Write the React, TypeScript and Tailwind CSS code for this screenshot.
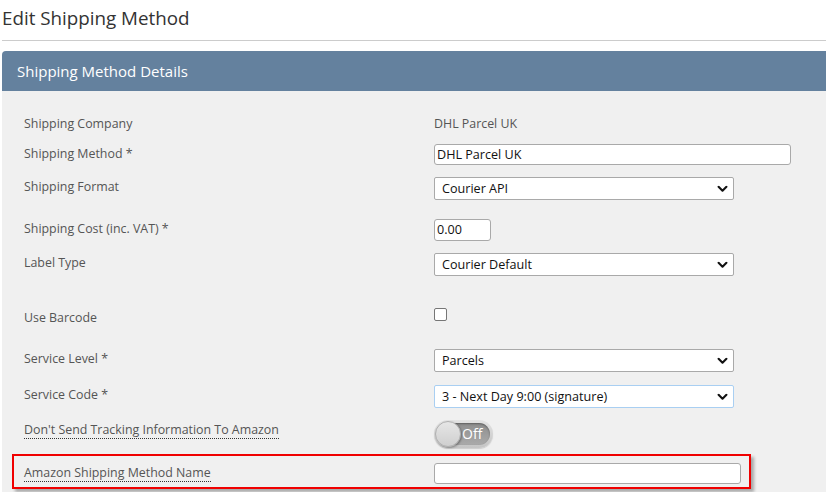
import React from "react";

const Chevron = () => (
  <svg width="11" height="7" viewBox="0 0 12 8" className="absolute right-[5px] top-1/2 -translate-y-1/2">
    <path d="M1.5 1.5 L6 6 L10.5 1.5" fill="none" stroke="#111" strokeWidth="2.4" strokeLinecap="round" strokeLinejoin="round" />
  </svg>
);

function Select({ value, width, focus }: { value: string; width: string; focus?: boolean }) {
  return (
    <div
      className={`relative h-[23px] bg-white border rounded-[2px] ${focus ? "border-[#a9cff2]" : "border-[#a9a9a9]"} ${width}`}
    >
      <div className="pl-[7px] text-[12.6px] leading-[21px] text-[#111]">{value}</div>
      <Chevron />
    </div>
  );
}

function Row({ label, h, children, dotted }: { label: string; h: string; children?: React.ReactNode; dotted?: boolean }) {
  return (
    <div className={`flex items-start ${h}`}>
      <div className="w-[410px] pt-[1px] text-[12.4px] leading-[18px] text-[#555]">
        {dotted ? <span className="border-b border-dotted border-[#333]">{label}</span> : label}
      </div>
      <div>{children}</div>
    </div>
  );
}

export default function App() {
  return (
    <div className="w-[826px] h-[492px] overflow-hidden bg-white font-['Open_Sans',sans-serif]">
      <div className="ml-[2px] h-[41px] border-b border-[#cccccc]">
        <div className="pt-[5px] text-[18.8px] leading-[26px] text-[#333]">Edit Shipping Method</div>
      </div>
      <div className="ml-[2px] mt-[10px]">
        <div className="h-[40px] bg-[#64819e] rounded-tl-[4px] pl-[15px] flex items-center">
          <span className="text-[15px] text-white leading-[22px] -mt-[1px]">Shipping Method Details</span>
        </div>
        <div className="bg-[#f0f0f0] pt-[23px] pl-[22px] h-[420px]">
          <Row label="Shipping Company" h="h-[30px]">
            <div className="pt-[1px] text-[12.4px] leading-[18px] text-[#555]">DHL Parcel UK</div>
          </Row>
          <Row label="Shipping Method *" h="h-[33px]">
            <div className="w-[357px] h-[21px] bg-white border border-[#a9a9a9] rounded-[3px] pl-[2px] text-[12.6px] leading-[19px] text-[#111]">
              DHL Parcel UK
            </div>
          </Row>
          <Row label="Shipping Format" h="h-[42px]">
            <Select value="Courier API" width="w-[300px]" />
          </Row>
          <Row label="Shipping Cost (inc. VAT) *" h="h-[34px]">
            <div className="w-[57px] h-[22px] bg-white border border-[#a9a9a9] rounded-[3px] pl-[2px] text-[12.6px] leading-[20px] text-[#111]">
              0.00
            </div>
          </Row>
          <Row label="Label Type" h="h-[55px]">
            <Select value="Courier Default" width="w-[300px]" />
          </Row>
          <Row label="Use Barcode" h="h-[41px]">
            <div className="w-[13px] h-[13px] bg-white border border-[#767676] rounded-[2px]" />
          </Row>
          <Row label="Service Level *" h="h-[36px]">
            <Select value="Parcels" width="w-[300px]" />
          </Row>
          <Row label="Service Code *" h="h-[35px]">
            <Select value="3 - Next Day 9:00 (signature)" width="w-[300px]" focus />
          </Row>
          <Row label="Don't Send Tracking Information To Amazon" h="h-[34px]" dotted>
            <div className="w-[59px] h-[28px] rounded-full bg-gradient-to-b from-[#e4e4e4] to-[#c4c4c4] p-[3px] shadow-[0_1px_1px_rgba(0,0,0,0.15)]">
              <div className="relative w-full h-full rounded-full bg-gradient-to-b from-[#8e8e8e] to-[#aaaaaa] shadow-[inset_0_1px_2px_rgba(0,0,0,0.35)]">
                <span className="absolute left-[25px] top-[1px] text-[14px] leading-[20px] text-white">Off</span>
                <div className="absolute -left-[2px] -top-[2px] w-[26px] h-[26px] rounded-full bg-gradient-to-b from-[#e6e6e6] to-[#cfcfcf] border border-[#b0b0b0] shadow-[1px_1px_2px_rgba(0,0,0,0.3)]" />
              </div>
            </div>
          </Row>
          <div className="-ml-[12px] w-[739px] h-[35px] border-2 border-[#f00000] shadow-[3px_3px_3px_rgba(0,0,0,0.3)] pl-[10px] flex items-start">
            <div className="w-[410px] pt-[8px] text-[12.4px] leading-[18px] text-[#555]">
              <span className="border-b border-dotted border-[#333]">Amazon Shipping Method Name</span>
            </div>
            <div className="pt-[7px]">
              <div className="w-[307px] h-[21px] bg-white border border-[#a9a9a9] rounded-[3px]" />
            </div>
          </div>
        </div>
      </div>
    </div>
  );
}
